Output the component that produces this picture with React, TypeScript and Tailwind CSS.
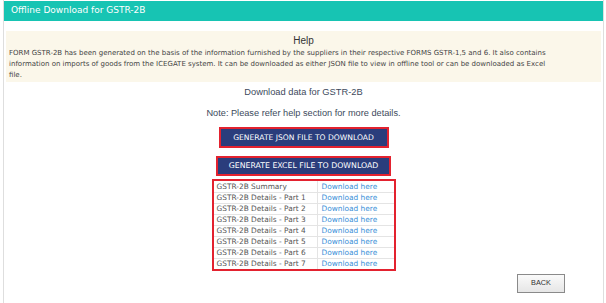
import React from "react";

const rows = [
  "GSTR-2B Summary",
  "GSTR-2B Details - Part 1",
  "GSTR-2B Details - Part 2",
  "GSTR-2B Details - Part 3",
  "GSTR-2B Details - Part 4",
  "GSTR-2B Details - Part 5",
  "GSTR-2B Details - Part 6",
  "GSTR-2B Details - Part 7",
];

export default function App() {
  return (
    <div className="w-[606px] h-[303px] bg-white overflow-hidden">
      <div className="ml-[3px] w-[601px] h-[303px] border-x border-[#dedede] flex flex-col">
        <div className="mt-px h-[20px] bg-[#17c4b3] flex items-center pl-[7px] text-white text-[9px] font-['DejaVu_Sans',Verdana,sans-serif]">
          Offline Download for GSTR-2B
        </div>
        <div className="mt-[10px] mx-[2px] h-[51px] bg-[#fbf7ea] pt-[3px] font-['DejaVu_Sans',Verdana,sans-serif] text-[#333]">
          <div className="text-center leading-[14px] text-[10px] font-['Liberation_Sans',Arial,sans-serif] text-[#333]">Help</div>
          <div className="pl-[3px] text-[7px] leading-[11px] text-[#444]">
            <div className="whitespace-nowrap">FORM GSTR-2B has been generated on the basis of the information furnished by the suppliers in their respective FORMS GSTR-1,5 and 6. It also contains</div>
            <div className="whitespace-nowrap">information on imports of goods from the ICEGATE system. It can be downloaded as either JSON file to view in offline tool or can be downloaded as Excel</div>
            <div className="whitespace-nowrap">file.</div>
          </div>
        </div>
        <div className="flex flex-col items-center font-['Liberation_Sans',Arial,sans-serif] text-[#3d4a5c]">
          <div className="mt-[3px] leading-[14px] text-[9.3px]">Download data for GSTR-2B</div>
          <div className="mt-[7px] leading-[14px] text-[9.2px]">Note: Please refer help section for more details.</div>
          <button className="mt-[7px] w-[170px] h-[21px] border-2 border-[#e3222f] bg-[#2a3d7c] text-white text-[7.6px] font-['DejaVu_Sans',Verdana,sans-serif] flex items-center justify-center whitespace-nowrap">
            GENERATE JSON FILE TO DOWNLOAD
          </button>
          <button className="mt-[8px] w-[175px] h-[20px] border-2 border-[#e3222f] bg-[#2a3d7c] text-white text-[7.8px] font-['DejaVu_Sans',Verdana,sans-serif] flex items-center justify-center whitespace-nowrap">
            GENERATE EXCEL FILE TO DOWNLOAD
          </button>
          <div className="mt-[3px] w-[184px] h-[92px] border-2 border-[#e3222f] bg-white font-['DejaVu_Sans',Verdana,sans-serif] text-[7.4px]">
            {rows.map((r, i) => (
              <div key={r} className={`flex h-[11px] items-center ${i > 0 ? "border-t border-[#e4e4e4]" : ""}`}>
                <div className="w-[104px] h-full flex items-center pl-[3px] text-[#555] border-r border-[#e4e4e4] whitespace-nowrap">{r}</div>
                <div className="pl-[4px] text-[#3a8fd8] whitespace-nowrap">Download here</div>
              </div>
            ))}
          </div>
        </div>
        <div className="mt-[3px] self-end mr-[38px] w-[48px] h-[19px] border border-[#8a8a8a] bg-gradient-to-b from-[#fafafa] to-[#e6e6e6] flex items-center justify-center text-[7.3px] text-[#333] font-['Liberation_Sans',Arial,sans-serif]">
          BACK
        </div>
      </div>
    </div>
  );
}
